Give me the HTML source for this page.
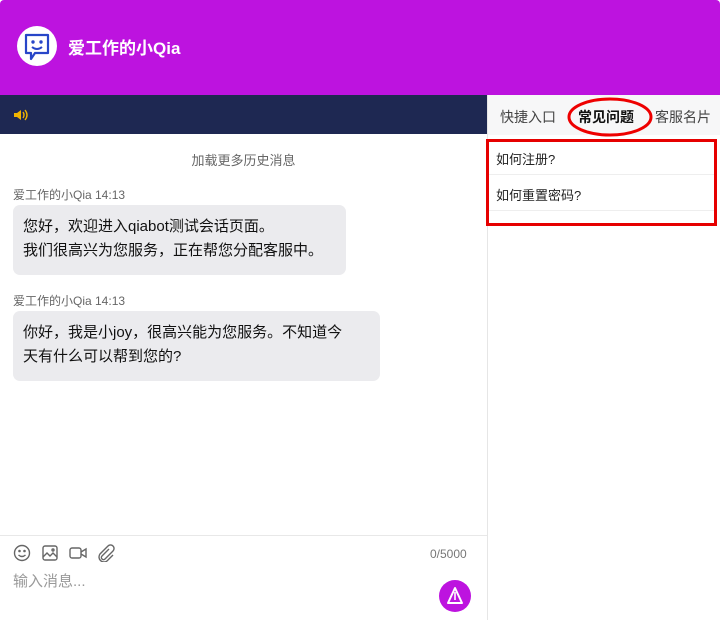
<!DOCTYPE html>
<html><head><meta charset="utf-8"><style>
*{box-sizing:border-box;margin:0;padding:0}
body{width:720px;height:620px;background:#fff;font-family:"Liberation Sans","Noto Sans CJK SC",sans-serif;position:relative;overflow:hidden}
.hdr{position:absolute;left:0;top:0;width:720px;height:95px;background:#bd13df;border-radius:4px 4px 0 0}
.logo{position:absolute;left:17px;top:26px;width:40px;height:40px;border-radius:50%;background:#fff}
.title{position:absolute;left:68px;top:34px;color:#fff;font-size:17px;font-weight:bold}
.bar{position:absolute;left:0;top:95px;width:487px;height:39px;background:#1e2852}
.div{position:absolute;left:487px;top:95px;width:1px;height:525px;background:#e6e6e6}
.tabs{position:absolute;left:488px;top:95px;width:232px;height:40px;background:#f7f7f8}
.tab{position:absolute;top:12px;font-size:14px;color:#444}
.load{position:absolute;left:0;width:487px;top:150px;text-align:center;font-size:13px;color:#666}
.meta{position:absolute;left:13px;font-size:12px;color:#666}
.bub{position:absolute;left:13px;background:#ebebee;border-radius:7px;padding:10px 10px;font-size:15px;line-height:24px;color:#111}
.inp{position:absolute;left:0;top:535px;width:487px;height:1px;background:#e8e8e8}
.ph{position:absolute;left:13px;top:570px;font-size:15px;color:#999}
.cnt{position:absolute;left:430px;top:547px;font-size:12px;color:#777}
.send{position:absolute;left:439px;top:580px;width:32px;height:32px;border-radius:50%;background:#bd13df}
.faq{position:absolute;left:488px;width:228px;height:36px;border-bottom:1px solid #eee;font-size:13px;padding:10px 8px;color:#222}
</style></head><body>
<div class="hdr"></div>
<div class="logo"><svg width="40" height="40" viewBox="0 0 40 40"><path d="M9 9h22v18H18l-4 6v-6H9z" fill="none" stroke="#2846c8" stroke-width="2.2" stroke-linejoin="round"/><circle cx="16" cy="16" r="1.7" fill="#2846c8"/><circle cx="24" cy="16" r="1.7" fill="#2846c8"/><path d="M15 21q5 4 10 0" fill="none" stroke="#2846c8" stroke-width="2"/></svg></div>
<div class="title">爱工作的小Qia</div>
<div class="bar"><svg style="position:absolute;left:13px;top:13px" width="16" height="14" viewBox="0 0 16 14"><path d="M1 5h3l4-3v10l-4-3H1z" fill="#f0b400"/><path d="M10 4q2 3 0 6M12 2q4 5 0 10" fill="none" stroke="#f0b400" stroke-width="1.4"/></svg></div>
<div class="div"></div>
<div class="tabs">
<span class="tab" style="left:12px">快捷入口</span>
<span class="tab" style="left:90px;color:#111;font-weight:bold">常见问题</span>
<span class="tab" style="left:167px">客服名片</span>
</div>
<svg style="position:absolute;left:566px;top:96px" width="88" height="42"><ellipse cx="44" cy="21" rx="41" ry="18" fill="none" stroke="#e00" stroke-width="3"/></svg>
<div class="faq" style="top:139px">如何注册?</div>
<div class="faq" style="top:175px">如何重置密码?</div>
<div style="position:absolute;left:486px;top:139px;width:231px;height:87px;border:3px solid #e60000"></div>
<div class="load">加载更多历史消息</div>
<div class="meta" style="top:186px">爱工作的小Qia 14:13</div>
<div class="bub" style="top:205px;width:333px;height:70px">您好，欢迎进入qiabot测试会话页面。<br>我们很高兴为您服务，正在帮您分配客服中。</div>
<div class="meta" style="top:292px">爱工作的小Qia 14:13</div>
<div class="bub" style="top:311px;width:367px;height:70px">你好，我是小joy，很高兴能为您服务。不知道今<br>天有什么可以帮到您的?</div>
<div class="inp"></div>
<svg style="position:absolute;left:13px;top:544px" width="105" height="18" viewBox="0 0 105 18" fill="none" stroke="#666" stroke-width="1.4">
<circle cx="9" cy="9" r="7.5"/><circle cx="6.5" cy="7" r=".6" fill="#666"/><circle cx="11.5" cy="7" r=".6" fill="#666"/><path d="M5.5 11q3.5 3 7 0"/>
<rect x="30" y="2" width="14" height="14" rx="2"/><path d="M30 13l4-4 3 3 3-3 4 4"/><circle cx="40" cy="6" r="1"/>
<rect x="57" y="4" width="11" height="10" rx="2"/><path d="M68 8l5-3v8l-5-3"/>
<path d="M96 5l-7 7a2 2 0 0 0 3 3l8-8a3.5 3.5 0 0 0-5-5l-8 8a5 5 0 0 0 7 7l6-6"/>
</svg>
<div class="cnt">0/5000</div>
<div class="ph">输入消息...</div>
<div class="send"><svg width="32" height="32" viewBox="0 0 32 32"><path d="M16 8l-7 15h14z" fill="none" stroke="#fff" stroke-width="2" stroke-linejoin="round"/><path d="M16 12v8" stroke="#fff" stroke-width="1.6"/></svg></div>
</body></html>
